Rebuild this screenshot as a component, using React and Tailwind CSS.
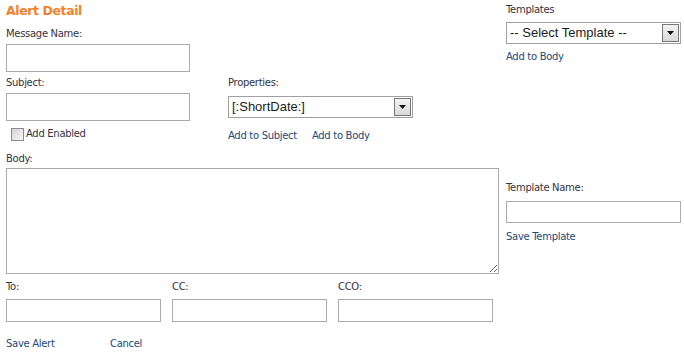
const label = "block h-[14px] leading-[14px] text-[10px] tracking-[-0.3px] text-[#333340]";
const link = "h-[14px] leading-[14px] text-[10px] tracking-[-0.3px] text-[#22497a] cursor-pointer";
const box = "block border border-[#a9abb0] bg-white outline-none";

function FakeSelect({ value, width }) {
    return (
        <div className={`flex h-[22px] ${width} items-stretch border border-[#a0a0a0] bg-white`}>
            <div className="flex-1 pl-[3px] font-['Liberation_Sans',Arial,sans-serif] text-[13px] leading-[20px] text-[#1b1b1b]">
                {value}
            </div>
            <div className="m-[1px] flex w-[17px] items-center justify-center border border-[#777] bg-gradient-to-b from-[#f4f4f4] to-[#d9d9d9]">
                <svg width="7" height="4" viewBox="0 0 7 4">
                    <path d="M0 0h7L3.5 4z" fill="#111" />
                </svg>
            </div>
        </div>
    );
}

export default function App() {
    return (
        <div className="flex h-[353px] w-[684px] overflow-hidden bg-white font-['DejaVu_Sans',Verdana,sans-serif]">
            {/* left form */}
            <div className="w-[506px] shrink-0 pl-[6px]">
                <div className="mt-[1px] h-[20px] text-[12.5px] font-bold leading-[20px] tracking-[-0.4px] text-[#f5812a]">
                    Alert Detail
                </div>
                <span className={`${label} mt-[6px]`}>Message Name:</span>
                <input className={`${box} mt-[3px] h-[28px] w-[184px]`} />

                <div className="mt-[4px] flex">
                    <div className="w-[222px]">
                        <span className={label}>Subject:</span>
                        <input className={`${box} mt-[3px] h-[28px] w-[184px]`} />
                        <div className="mt-[6px] flex h-[14px] items-center">
                            <span className="ml-[5px] h-[13px] w-[13px] border border-[#8c8c8c] bg-gradient-to-br from-[#d4d4d4] to-[#f6f6f6]" />
                            <span className={`${label} ml-[2px]`}>Add Enabled</span>
                        </div>
                    </div>
                    <div>
                        <span className={label}>Properties:</span>
                        <div className="mt-[6px]">
                            <FakeSelect value="[:ShortDate:]" width="w-[185px]" />
                        </div>
                        <div className="mt-[11px] flex gap-[15px]">
                            <span className={link}>Add to Subject</span>
                            <span className={link}>Add to Body</span>
                        </div>
                    </div>
                </div>

                <span className={`${label} mt-[9px]`}>Body:</span>
                <textarea className={`${box} mt-[2px] h-[106px] w-[493px] resize`} />

                <div className="mt-[6px] flex gap-[11px]">
                    {["To:", "CC:", "CCO:"].map((t) => (
                        <div key={t}>
                            <span className={label}>{t}</span>
                            <input className={`${box} mt-[5px] h-[23px] w-[155px]`} />
                        </div>
                    ))}
                </div>

                <div className="mt-[15px] flex">
                    <span className={`${link} w-[104px]`}>Save Alert</span>
                    <span className={link}>Cancel</span>
                </div>
            </div>

            {/* right column */}
            <div className="w-[175px]">
                <span className={`${label} mt-[3px]`}>Templates</span>
                <div className="mt-[5px]">
                    <FakeSelect value="-- Select Template --" width="w-[175px]" />
                </div>
                <div className={`${link} mt-[6px]`}>Add to Body</div>

                <span className={`${label} mt-[117px]`}>Template Name:</span>
                <input className={`${box} mt-[6px] h-[22px] w-[175px]`} />
                <div className={`${link} mt-[7px]`}>Save Template</div>
            </div>
        </div>
    );
}
